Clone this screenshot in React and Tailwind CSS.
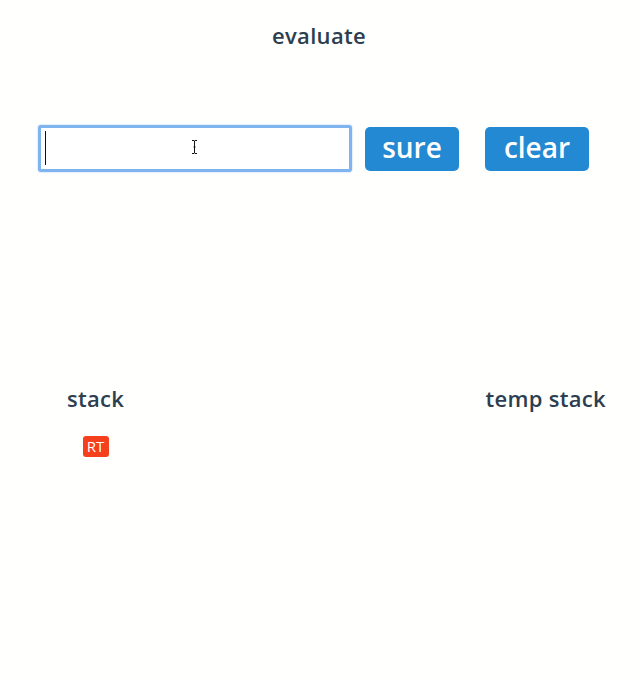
import React from "react";

const App = () => {
  return (
    <div
      className="min-h-screen w-full bg-[#fffffe] text-[#2c3e50] flex flex-col"
      style={{ fontFamily: "'Open Sans', 'Noto Sans', sans-serif" }}
    >
      <h1 className="text-center text-[22px] font-semibold leading-none tracking-[0.3px] pt-[24px]">
        evaluate
      </h1>

      <div className="flex items-center pl-[38px] mt-[79px]">
        <div className="relative">
          <input
            autoFocus
            className="w-[314px] h-[47px] rounded-[3px] border-[3px] border-[#7fb4ef] bg-white px-[5px] text-[28px] outline-none shadow-[0_0_2px_#9fc8f5] caret-transparent"
          />
          <span className="absolute left-[7px] top-[6px] w-[1px] h-[34px] bg-[#111] pointer-events-none" />
          <svg
            className="absolute left-[153px] top-[15px] pointer-events-none"
            width="7"
            height="14"
            viewBox="0 0 7 14"
          >
            <path d="M1 0.5h2l0.5 0.5 0.5-0.5h2M3.5 1v12M1 13.5h2l0.5-0.5 0.5 0.5h2M2.5 7h2" stroke="#111" strokeWidth="1" fill="none" />
          </svg>
        </div>
        <button className="ml-[13px] w-[94px] h-[44px] rounded-[5px] bg-[#2489d3] text-white text-[28px] font-semibold leading-none pb-[3px]">
          sure
        </button>
        <button className="ml-[26px] w-[104px] h-[44px] rounded-[5px] bg-[#2489d3] text-white text-[28px] font-semibold leading-none pb-[3px]">
          clear
        </button>
      </div>

      <div className="flex justify-between mt-[215px] pl-[67px] pr-[32px]">
        <div className="flex flex-col items-center">
          <h2 className="text-[22px] font-semibold leading-none tracking-[0.3px]">stack</h2>
          <span className="mt-[27px] w-[26px] h-[21px] rounded-[3px] bg-[#f5401e] text-white text-[15px] font-medium flex items-center justify-center leading-none">
            RT
          </span>
        </div>
        <h2 className="text-[22px] font-semibold leading-none tracking-[0.3px]">temp stack</h2>
      </div>
    </div>
  );
};

export default App;
